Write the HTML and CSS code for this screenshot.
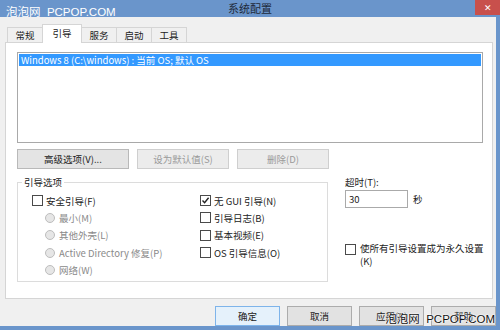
FILE: index.html
```html
<!DOCTYPE html>
<html lang="zh-CN">
<head>
<meta charset="utf-8">
<title>系统配置</title>
<link rel="stylesheet" href="styles.css">
</head>
<body>
<div class="window">
  <div class="titlebar">
    <span class="title">系统配置</span>
    <span class="close">✕</span>
    <span class="mark mark-top">泡泡网&nbsp; PCPOP.COM</span>
  </div>
  <div class="frame">
    <div class="tabs">
      <span class="tab">常规</span>
      <span class="tab active">引导</span>
      <span class="tab">服务</span>
      <span class="tab">启动</span>
      <span class="tab">工具</span>
    </div>
    <div class="panel">
      <div class="listbox">
        <div class="item selected">Windows 8 (C:\windows) : 当前 OS; 默认 OS</div>
      </div>
      <div class="btnrow">
        <span class="btn wide">高级选项(V)...</span>
        <span class="btn disabled">设为默认值(S)</span>
        <span class="btn disabled">删除(D)</span>
      </div>
      <div class="lower">
        <fieldset class="group">
          <legend>引导选项</legend>
          <div class="cols">
            <div class="col left">
              <div class="row"><span class="cb"></span>安全引导(F)</div>
              <div class="row sub dis"><span class="radio"></span>最小(M)</div>
              <div class="row sub dis"><span class="radio"></span>其他外壳(L)</div>
              <div class="row sub dis"><span class="radio"></span>Active Directory 修复(P)</div>
              <div class="row sub dis"><span class="radio"></span>网络(W)</div>
            </div>
            <div class="col right">
              <div class="row"><span class="cb checked"><svg viewBox="0 0 9 9" width="9" height="9"><path d="M1.5 4.6 L3.6 6.8 L7.6 1.8" fill="none" stroke="#222" stroke-width="1.4"/></svg></span>无 GUI 引导(N)</div>
              <div class="row"><span class="cb"></span>引导日志(B)</div>
              <div class="row"><span class="cb"></span>基本视频(E)</div>
              <div class="row"><span class="cb"></span>OS 引导信息(O)</div>
            </div>
          </div>
        </fieldset>
        <div class="side">
          <div class="label">超时(T):</div>
          <div class="timeout"><span class="input">30</span><span class="unit">秒</span></div>
          <div class="perm"><span class="cb"></span><span>使所有引导设置成为永久设置<br>(K)</span></div>
        </div>
      </div>
    </div>
    <div class="footer">
      <span class="btn fbtn default">确定</span>
      <span class="btn fbtn">取消</span>
      <span class="btn fbtn">应用(A)</span>
      <span class="btn fbtn">帮助</span>
    </div>
  </div>
  <span class="mark mark-bottom">泡泡网&nbsp; PCPOP.COM</span>
</div>
</body>
</html>
```
FILE: styles.css
```css
html, body {
  margin: 0;
  padding: 0;
}
body {
  width: 500px;
  height: 330px;
  overflow: hidden;
  font-family: "Noto Sans CJK SC", "Noto Sans", sans-serif;
  font-size: 9.5px;
  color: #222;
}
.window {
  position: relative;
  width: 500px;
  height: 330px;
  background: #6a95cb;
  display: flex;
  flex-direction: column;
}
.titlebar {
  position: relative;
  height: 22px;
  display: flex;
  align-items: center;
  justify-content: center;
}
.title {
  font-size: 11px;
  color: #1e2a3a;
  margin-top: -2px;
}
.close {
  position: absolute;
  right: 0;
  top: 0;
  width: 25px;
  height: 15px;
  background: #c8504c;
  color: #fff;
  font-size: 9px;
  display: flex;
  align-items: center;
  justify-content: center;
}
.mark {
  position: absolute;
  font-family: "Liberation Sans", "Noto Sans CJK SC", sans-serif;
  font-size: 11.5px;
  white-space: nowrap;
}
.mark-top {
  left: 6px;
  top: 3px;
  color: #fff;
}
.mark-bottom {
  right: 5px;
  bottom: 4px;
  color: #111;
  text-shadow: 0 0 2px #fff, 0 0 2px #fff, 0 0 1px #fff;
}
.frame {
  flex: 1;
  background: #f0f0f0;
  margin-right: 4px;
  margin-bottom: 4px;
  display: flex;
  flex-direction: column;
}
.tabs {
  display: flex;
  align-items: flex-end;
  padding-left: 7px;
  height: 25px;
  position: relative;
  z-index: 1;
}
.tab {
  width: 34px;
  height: 14px;
  line-height: 14px;
  text-align: center;
  border: 1px solid #d5d5d5;
  border-bottom: none;
  background: #f0f0f0;
  margin-right: -1px;
  font-size: 9.5px;
}
.tab.active {
  width: 38px;
  height: 18px;
  line-height: 16px;
  background: #fff;
  margin-bottom: -1px;
  position: relative;
  z-index: 2;
}
.panel {
  height: 246px;
  margin: 0 3px 0 5px;
  border: 1px solid #d5d5d5;
  background: #fff;
  padding: 9px 0 0 11px;
  display: flex;
  flex-direction: column;
}
.listbox {
  width: 462px;
  height: 88px;
  border: 1px solid #a9a9a9;
  padding: 1px 1px 0 1px;
  flex: none;
}
.item {
  height: 12px;
  line-height: 12px;
  padding-left: 2px;
}
.item.selected {
  background: #3399ff;
  color: #fff;
}
.btnrow {
  display: flex;
  margin-top: 6px;
  gap: 8px;
}
.btn {
  display: flex;
  align-items: center;
  justify-content: center;
  height: 18px;
  border: 1px solid #b9b9b9;
  background: #e4e4e4;
  color: #222;
}
.btnrow .btn {
  width: 90px;
}
.btnrow .btn.wide {
  width: 110px;
}
.btn.disabled {
  color: #9a9a9a;
  border-color: #cfcfcf;
  background: #ececec;
}
.lower {
  display: flex;
  align-items: flex-start;
  margin-top: 7px;
}
.group {
  width: 309px;
  margin: 0;
  padding: 0 0 3px 0;
  border: 1px solid #dcdcdc;
  flex: none;
}
.group legend {
  margin-left: 4px;
  padding: 0 2px;
  line-height: 12px;
}
.cols {
  display: flex;
  padding: 4px 0 0 14px;
}
.col.left {
  width: 168px;
}
.row {
  display: flex;
  align-items: center;
  height: 17.3px;
  white-space: nowrap;
}
.row.sub {
  padding-left: 13px;
}
.row.dis {
  color: #8a8a8a;
}
.cb {
  width: 9px;
  height: 9px;
  border: 1px solid #4a4a4a;
  background: #fff;
  margin-right: 3px;
  flex: none;
  display: flex;
}
.radio {
  width: 8px;
  height: 8px;
  border-radius: 50%;
  border: 1px solid #bdbdbd;
  background: #e6e6e6;
  margin-right: 4px;
  flex: none;
}
.side {
  margin-left: 17px;
  display: flex;
  flex-direction: column;
  flex: 1;
  white-space: nowrap;
}
.label {
  line-height: 12px;
}
.timeout {
  display: flex;
  align-items: center;
  margin-top: 2px;
}
.input {
  width: 58px;
  height: 16px;
  border: 1px solid #aaa;
  background: #fff;
  padding-left: 3px;
  line-height: 16px;
}
.unit {
  margin-left: 5px;
}
.perm {
  display: flex;
  align-items: flex-start;
  margin-top: 34px;
  line-height: 13px;
}
.perm .cb {
  margin-top: 2px;
  margin-right: 4px;
}
.footer {
  display: flex;
  justify-content: flex-end;
  gap: 7px;
  padding-top: 7px;
}
.fbtn {
  width: 63px;
  height: 18px;
  background: #e2e2e2;
  border-color: #acacac;
}
.fbtn.default {
  border-color: #7eb4ea;
  background: #e5f1fb;
}
```
